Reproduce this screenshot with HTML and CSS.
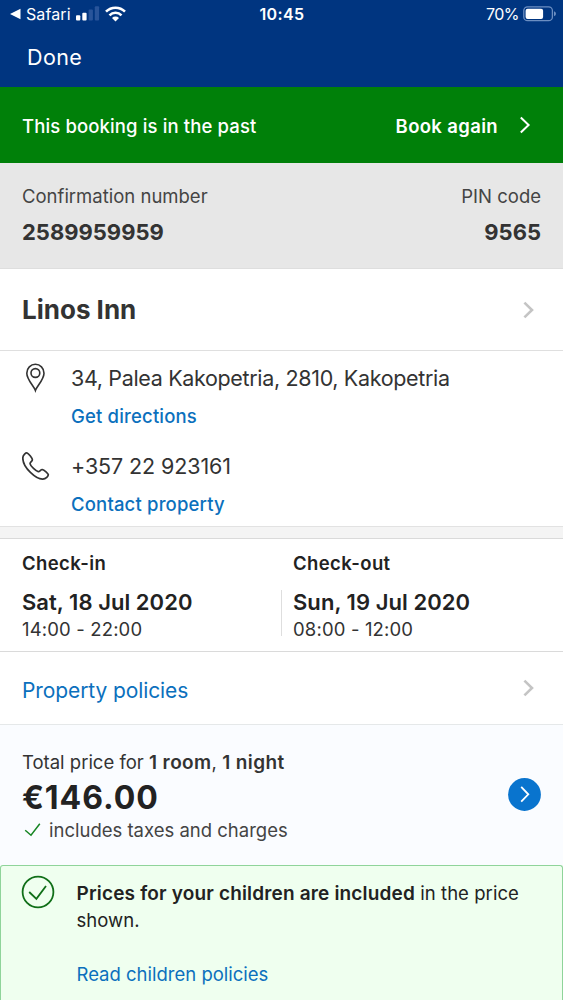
FILE: index.html
```html
<!DOCTYPE html>
<html lang="en">
<head>
<meta charset="utf-8">
<title>Booking details</title>
<link rel="stylesheet" href="styles.css">
</head>
<body>
<main class="screen">
  <header class="top">
    <div class="status">
      <div class="status-left">
        <svg class="back" width="11" height="12" viewBox="0 0 11 12"><path d="M0 6 L10.5 0.8 V11.2 Z" fill="#fff"/></svg>
        <span class="app">Safari</span>
        <svg class="signal" width="24" height="15" viewBox="0 0 24 15"><rect x="0" y="9.3" width="4.3" height="5.2" rx="1" fill="#fff"/><rect x="6.3" y="6.7" width="4.3" height="7.8" rx="1" fill="#fff"/><rect x="12.6" y="3.6" width="4.3" height="10.9" rx="1" fill="#28549a"/><rect x="18.8" y="0.3" width="4.3" height="14.2" rx="1" fill="#28549a"/></svg>
        <svg class="wifi" width="21" height="16" viewBox="0 0 21 16"><g fill="none" stroke="#fff" stroke-width="2.6"><path d="M1 5.7 A13.4 13.4 0 0 1 20 5.7"/><path d="M4.5 9.3 A8.5 8.5 0 0 1 16.5 9.3"/></g><path d="M10.5 15.5 L7 12 A5 5 0 0 1 14 12 Z" fill="#fff"/></svg>
      </div>
      <span class="clock">10:45</span>
      <div class="status-right">
        <span class="percent">70%</span>
        <svg class="battery" width="33" height="16" viewBox="0 0 33 16"><rect x="0.8" y="0.8" width="28.6" height="13.9" rx="3.8" fill="none" stroke="#6c8fc2" stroke-width="1.3"/><rect x="2.6" y="2.7" width="17.5" height="10.2" rx="2" fill="#fff"/><path d="M31 5.3 Q33 6 33 7.8 T31 10.3 Z" fill="#6c8fc2"/></svg>
      </div>
    </div>
    <div class="nav"><span class="done">Done</span></div>
  </header>

  <section class="banner">
    <span class="past">This booking is in the past</span>
    <span class="again">Book again</span>
    <svg class="banner-chev" width="12" height="18" viewBox="0 0 12 18"><path d="M1.8 1.5 L9.6 9 L1.8 16.5" fill="none" stroke="#fff" stroke-width="2"/></svg>
  </section>

  <section class="codes">
    <div><div class="label confirm">Confirmation number</div><div class="code confirm-no">2589959959</div></div>
    <div class="right"><div class="label pin">PIN code</div><div class="code pin-no">9565</div></div>
  </section>

  <section class="hotel">
    <h1 class="name">Linos Inn</h1>
    <svg class="chev" width="12" height="18" viewBox="0 0 12 18"><path d="M1.4 1.6 L9 9 L1.4 16.4" fill="none" stroke="#c4c4c4" stroke-width="2.6"/></svg>
  </section>

  <section class="contact">
    <div class="entry">
      <svg class="pin-icon" width="28" height="30" viewBox="0 0 28 30"><g fill="none" stroke="#333" stroke-width="1.6"><path d="M13.4 27.5 C11.8 23 4.8 16.5 4.8 10.2 A8.6 8.9 0 0 1 22 10.2 C22 16.5 15 23 13.4 27.5 Z"/><circle cx="13.4" cy="10" r="4.4"/></g></svg>
      <div><div class="value address">34, Palea Kakopetria, 2810, Kakopetria</div><div class="link directions">Get directions</div></div>
    </div>
    <div class="entry">
      <svg class="phone-icon" width="28" height="30" viewBox="0 0 28 30"><path d="M5.2 2 C4 1.4 .9 3.8 .8 7 C.8 12 4.2 17.3 8.4 21.4 C12.8 25.7 17 28.2 20.7 28.1 C24 28 26.5 25 26.3 23.6 C26.2 22.6 22.3 18.9 20.3 18.5 C18.7 18.3 17.8 21 16.2 20.7 C14.1 20.3 8.5 15.1 8.1 12.8 C7.8 11.2 10.4 10.3 10.4 8.8 C10.4 7.1 6.7 2.7 5.2 2 Z" fill="none" stroke="#333" stroke-width="1.7"/></svg>
      <div><div class="value phone">+357 22 923161</div><div class="link reach">Contact property</div></div>
    </div>
  </section>

  <div class="band"></div>

  <section class="dates">
    <div class="date"><div class="when">Check-in</div><div class="day in-day">Sat, 18 Jul 2020</div><div class="hours">14:00 - 22:00</div></div>
    <div class="divider"></div>
    <div class="date"><div class="when out">Check-out</div><div class="day out-day">Sun, 19 Jul 2020</div><div class="hours">08:00 - 12:00</div></div>
  </section>

  <section class="policies">
    <span class="policies-link">Property policies</span>
    <svg class="chev" width="12" height="18" viewBox="0 0 12 18"><path d="M1.4 1.6 L9 9 L1.4 16.4" fill="none" stroke="#c4c4c4" stroke-width="2.6"/></svg>
  </section>

  <section class="price">
    <div>
      <div class="total">Total price for <b>1 room</b>, <b>1 night</b></div>
      <div class="amount">€146.00</div>
      <div class="taxes"><svg class="tick" width="27" height="16" viewBox="0 0 27 16"><path d="M3.2 8.2 L9 13.2 L17.8 1.8" fill="none" stroke="#168523" stroke-width="1.5"/></svg><span class="includes">includes taxes and charges</span></div>
    </div>
    <svg class="go" width="33" height="33" viewBox="0 0 33 33"><circle cx="16.5" cy="16.5" r="16.4" fill="#0974ce"/><path d="M13.2 8.9 L20.3 16.3 L13.2 23.7" fill="none" stroke="#fff" stroke-width="1.8"/></svg>
  </section>

  <section class="notice">
    <svg class="ok" width="34" height="34" viewBox="0 0 34 34"><circle cx="17" cy="17" r="15.4" fill="none" stroke="#106f18" stroke-width="1.8"/><path d="M8.2 17 L15.4 23.8 L25 11" fill="none" stroke="#106f18" stroke-width="1.8"/></svg>
    <div class="notice-text">
      <div class="line first"><b>Prices for your children are included</b> in the price</div>
      <div class="line shown">shown.</div>
      <div class="line read">Read children policies</div>
    </div>
  </section>
</main>
</body>
</html>
```
FILE: styles.css
```css
* { box-sizing: border-box; }
body { margin: 0; font-family: Inter, "Liberation Sans", sans-serif; font-size: 18.5px; color: #333; background: #fff; }
.screen { width: 563px; height: 1000px; overflow: hidden; display: flex; flex-direction: column; white-space: nowrap; }
.screen > * { flex: none; }
svg { display: block; flex: none; }
b { font-weight: 600; font-size: 19px; letter-spacing: 0.17px; }

.top { height: 87px; background: #003580; color: #fff; }
.status { height: 29px; display: grid; grid-template-columns: 1fr auto 1fr; align-items: center; font-size: 16px; line-height: 28px; padding: 0 7px 0 10px; }
.status-left, .status-right { display: flex; align-items: center; }
.status-right { justify-content: flex-end; }
.app { margin-left: 5px; width: 50px; letter-spacing: 0.1px; }
.signal { margin-top: -1px; }
.wifi { margin-left: 5px; margin-top: -1px; }
.status > * { margin-top: -1px; }
.clock { font-weight: 600; letter-spacing: 0.4px; margin-right: 2px; }
.percent { letter-spacing: -0.5px; }
.battery { margin-left: 4px; margin-top: -1px; }
.nav { padding-left: 27px; height: 56px; line-height: 56px; font-size: 21.5px; letter-spacing: 0.4px; }

.banner { height: 76px; padding: 1px 32px 0 22px; background: #008009; color: #fff; display: flex; align-items: center; }
.past { font-weight: 500; letter-spacing: 0.13px; }
.again { margin-left: auto; font-weight: 600; letter-spacing: 0.35px; }
.banner-chev { margin: -2px 0 0 21px; }

.codes { height: 106px; background: #e7e7e7; padding: 19px 22px 0; display: flex; justify-content: space-between; border-bottom: 1px solid #dedede; }
.right { text-align: right; }
.label { line-height: 28px; color: #444; }
.code { font-size: 22px; font-weight: 700; line-height: 44px; }

.hotel { height: 82px; padding: 0 28px 0 22px; display: flex; align-items: center; justify-content: space-between; border-bottom: 1px solid #dfdfdf; }
.name { margin: 0; font-size: 26px; font-weight: 700; line-height: 40px; }

.contact { height: 175px; padding: 9px 22px 0; }
.entry { display: flex; height: 88px; gap: 21px; }
.pin-icon { margin-top: 3px; }
.phone-icon { margin-top: 3px; }
.value { font-size: 21.5px; line-height: 37px; }
.address { letter-spacing: -0.34px; }
.phone { letter-spacing: -0.1px; }
.link { font-weight: 500; line-height: 39px; color: #0b70bd; letter-spacing: 0.17px; }

.band { height: 13px; background: #f4f4f4; border-top: 1px solid #e2e2e2; border-bottom: 1px solid #dadada; }

.dates { height: 113px; padding: 10px 22px 0; display: flex; border-bottom: 1px solid #dadada; }
.date { flex: none; width: 259px; }
.when { font-weight: 600; line-height: 29px; color: #222; letter-spacing: 0.4px; }
.day { font-size: 22px; font-weight: 600; line-height: 48px; color: #222; letter-spacing: 0.05px; }
.hours { line-height: 6px; letter-spacing: 0.15px; }
.divider { flex: none; width: 1px; height: 46px; margin: 41px 11px 0 0; background: #dedede; }

.policies { height: 73px; padding: 0 28px 0 22px; display: flex; align-items: center; justify-content: space-between; border-bottom: 1px solid #e5e8e9; }
.policies-link { font-size: 21px; color: #0b70bd; padding-top: 4px; letter-spacing: -0.1px; }

.price { height: 140px; padding: 22px 22px 0; background: #fafcff; display: flex; justify-content: space-between; }
.total { line-height: 30px; }
.total b { letter-spacing: 0.4px; }
.amount { font-size: 32px; font-weight: 700; line-height: 39px; color: #222; letter-spacing: 0.95px; }
.taxes { display: flex; align-items: center; line-height: 26px; color: #444; }
.tick { margin-top: -1px; }
.go { margin-top: 31px; }

.notice { height: 140px; padding: 10px 20px 0 20px; background: #efffef; border: 1px solid #8fd49a; border-bottom: 0; border-radius: 3px 3px 0 0; display: flex; color: #222; }
.notice-text { margin-left: 21.5px; padding-top: 4px; }
.ok { margin-top: -1px; }
.line { line-height: 27px; letter-spacing: 0.05px; }
.read { margin-top: 27px; color: #0b70bd; letter-spacing: 0; }
```
